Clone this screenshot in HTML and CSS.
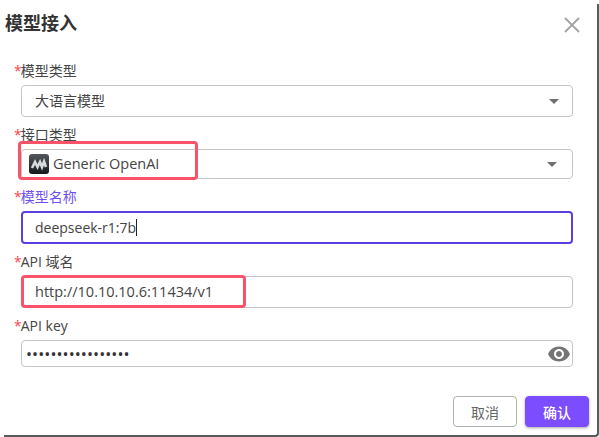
FILE: index.html
```html
<!DOCTYPE html>
<html lang="zh-CN">
<head>
    <meta charset="UTF-8">
    <meta name="viewport" content="width=device-width, initial-scale=1.0">
    <title>模型接入</title>
    <link rel="stylesheet" href="styles.css">
</head>
<body>
    <div class="dialog">
        <div class="dialog-head">
            <h1>模型接入</h1>
            <svg class="close" width="16" height="16" viewBox="0 0 16 16"><path d="M1 1L15 15M15 1L1 15" stroke="#a3a3a3" stroke-width="1.8" fill="none"/></svg>
        </div>

        <div class="field">
            <div class="label"><span class="req">*</span>模型类型</div>
            <div class="box select h32"><span class="box-text">大语言模型</span><i class="arrow"></i></div>
        </div>

        <div class="field">
            <div class="label"><span class="req">*</span>接口类型</div>
            <div class="box select h30 has-logo">
                <svg class="logo" width="20" height="20" viewBox="0 0 20 20">
                    <defs><linearGradient id="logoBg" x1="0" y1="0" x2="0" y2="1"><stop offset="0" stop-color="#54585c"/><stop offset="1" stop-color="#15181a"/></linearGradient></defs>
                    <rect width="20" height="20" rx="3" fill="url(#logoBg)"/>
                    <path d="M3 14L6 8L8.5 13L11 8L13 13L15 7.5L17 13" stroke="#d8dadc" stroke-width="2.6" fill="none"/>
                </svg>
                <span class="box-text latin">Generic OpenAI</span><i class="arrow shift"></i>
                <div class="mark mark-type"></div>
            </div>
        </div>

        <div class="field focused">
            <div class="label"><span class="req">*</span>模型名称</div>
            <div class="box active"><span class="box-text">deepseek-r1:7b</span><i class="caret"></i></div>
        </div>

        <div class="field">
            <div class="label"><span class="req">*</span>API 域名</div>
            <div class="box h32">
                <span class="box-text latin">http://10.10.10.6:11434/v1</span>
                <div class="mark mark-url"></div>
            </div>
        </div>

        <div class="field">
            <div class="label"><span class="req">*</span>API key</div>
            <div class="box password"><span class="dots">•••••••••••••••••</span>
                <svg class="eye" width="24" height="24" viewBox="0 0 24 24"><path fill="#757575" d="M12 4.5C7 4.5 2.73 7.61 1 12c1.73 4.39 6 7.5 11 7.5s9.27-3.11 11-7.5c-1.73-4.39-6-7.5-11-7.5zM12 17c-2.76 0-5-2.24-5-5s2.24-5 5-5 5 2.24 5 5-2.24 5-5 5zm0-8c-1.66 0-3 1.34-3 3s1.34 3 3 3 3-1.34 3-3-1.34-3-3-3z"/></svg>
            </div>
        </div>

        <div class="actions">
            <button class="btn">取消</button>
            <button class="btn primary">确认</button>
        </div>
    </div>
</body>
</html>
```

FILE: styles.css
```css
html, body { margin: 0; padding: 0; background: #fff; }
body { font-family: "Open Sans", "Noto Sans CJK SC", sans-serif; font-size: 14px; color: #444; width: 599px; height: 437px; overflow: hidden; }
.dialog { box-sizing: border-box; width: 599px; height: 437px; padding: 0 24px 0 14px; border-right: 2px solid #5a5a5a; border-bottom: 2px solid #5a5a5a; border-bottom-right-radius: 4px; clip-path: inset(4px 0 0 4px); }

.dialog-head { display: flex; justify-content: space-between; align-items: center; height: 60px; margin-left: -9px; margin-right: -7px; padding-bottom: 14px; box-sizing: border-box; }
h1 { margin: 0; font-size: 18px; font-weight: 700; color: #333; line-height: 26px; }
.close { display: block; margin-top: 4px; }

.field { height: 64px; }
.field.focused { height: 65px; margin-top: -2px; }
.label { height: 25px; line-height: 22px; color: #444; }
.focused .label { color: #6f4ff2; }
.req { color: #f5474f; margin-right: -1px; }

.box { position: relative; box-sizing: border-box; display: flex; align-items: center; margin-left: 7px; height: 27px; padding-left: 13px; border: 1px solid #c4c4c4; border-radius: 4px; }
.h32 { height: 32px; }
.h30 { height: 30px; }
.box-text { line-height: 20px; color: #444; }
.latin { font-size: 14.5px; }
.select { justify-content: space-between; padding-right: 13px; }
.has-logo { justify-content: flex-start; padding-left: 7px; }
.logo { flex: none; margin-right: 4px; }
.arrow { width: 0; height: 0; border-left: 5px solid transparent; border-right: 5px solid transparent; border-top: 5px solid #6f6f6f; }
.arrow.shift { margin-left: auto; margin-right: 2px; }

.active { height: 33px; border: 2px solid #5b3fe0; padding-left: 12px; }
.caret { width: 1px; height: 17px; background: #222; }

.password { padding-left: 4px; padding-right: 1px; justify-content: space-between; }
.dots { font-size: 16px; letter-spacing: 0.08px; color: #333; }

/* red highlights from the tutorial screenshot */
.mark { position: absolute; box-sizing: border-box; border: 3px solid #f9536a; border-radius: 4px; }
.mark-type { left: -4px; top: -9px; width: 180px; height: 39px; }
.mark-url { left: -1px; top: -2px; width: 225px; height: 33px; }

.actions { display: flex; justify-content: flex-end; gap: 8px; margin-top: 17px; margin-right: -16px; }
.btn { box-sizing: border-box; width: 64px; height: 31px; padding: 0; border: 1px solid #b0b0b0; border-radius: 4px; background: #fff; color: #666; font-family: inherit; font-size: 14px; }
.primary { background: #7c4dff; border-color: #7c4dff; color: #fff; font-weight: 500; box-shadow: 0 1px 3px rgba(0,0,0,0.35); }
```
